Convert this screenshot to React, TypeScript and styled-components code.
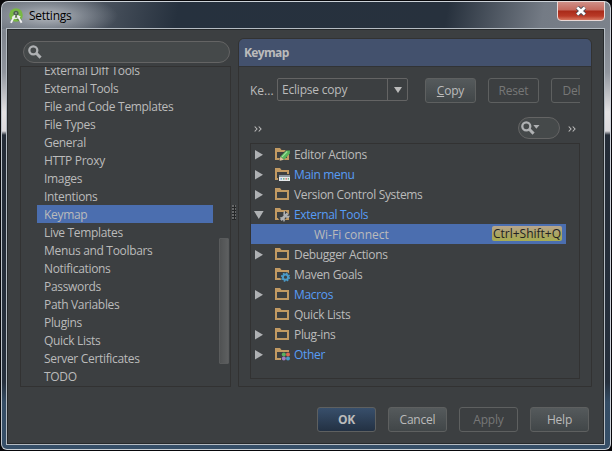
import type { FC, ReactNode } from 'react'
import { useState } from 'react'
import styled, { createGlobalStyle, css } from 'styled-components'

type Badge = 'pencil' | 'menu' | 'wrench' | 'gear' | 'dots'

interface TreeNode {
  label: string
  /** undefined means the node has no expander */
  open?: boolean
  changed?: boolean
  badge?: Badge
  shortcut?: string
}

const SETTINGS = [
  'External Diff Tools',
  'External Tools',
  'File and Code Templates',
  'File Types',
  'General',
  'HTTP Proxy',
  'Images',
  'Intentions',
  'Keymap',
  'Live Templates',
  'Menus and Toolbars',
  'Notifications',
  'Passwords',
  'Path Variables',
  'Plugins',
  'Quick Lists',
  'Server Certificates',
  'TODO'
]

const ACTIONS: TreeNode[] = [
  { label: 'Editor Actions', open: false, badge: 'pencil' },
  { label: 'Main menu', open: false, changed: true, badge: 'menu' },
  { label: 'Version Control Systems', open: false },
  { label: 'External Tools', open: true, changed: true, badge: 'wrench' },
  { label: 'Wi-Fi connect', shortcut: 'Ctrl+Shift+Q' },
  { label: 'Debugger Actions', open: false },
  { label: 'Maven Goals', badge: 'gear' },
  { label: 'Macros', open: false, changed: true },
  { label: 'Quick Lists' },
  { label: 'Plug-ins', open: false },
  { label: 'Other', open: false, changed: true, badge: 'dots' }
]

const AppIcon = () => (
  <svg width="15" height="16" viewBox="0 0 15 16">
    <circle cx="7" cy="7" r="6.8" fill="#78b843" />
    <path d="M4.6 9.6 7 5l5.6 6.4-2.2 1.8z" fill="#56793c" />
    <circle cx="7" cy="5.4" r="2.6" fill="#4e5f50" />
    <path d="M5.8 7.2 2 14.8M8.4 7.2l4.2 7.6" stroke="#f0f0f0" strokeWidth="1.9" fill="none" />
    <path d="M3.2 8.8c2.4 2.4 5.6 2.2 8-.6" stroke="#f0f0f0" strokeWidth="1.3" fill="none" />
    <circle cx="7" cy="5.2" r="1.1" fill="#8f9a91" />
  </svg>
)

const Magnifier: FC<{ menu?: boolean }> = ({ menu }) => (
  <svg width={menu ? 19 : 14} height="14" viewBox={menu ? '0 0 19 14' : '0 0 14 14'}>
    <circle cx="5.3" cy="5.3" r="4" fill="none" stroke="#afb1b3" strokeWidth="2.3" />
    <path d="m8 8 4.6 4.6" stroke="#afb1b3" strokeWidth="2.9" />
    {menu && <path d="M12.3 4h6.2l-3.1 3.7z" fill="#afb1b3" />}
  </svg>
)

const BADGES: Record<Badge, ReactNode> = {
  pencil: (
    <>
      <path d="m3.8 13.6 1.6-4.8L11.2 1.4h3.6v3L8.6 12.2z" fill="#3c3f41" />
      <path d="m5.4 8.6 6-6.2L15 2.6l-.2 3-5.8 6.2z" fill="#57b35b" />
      <path d="m7 8.9 5.2-5.4" stroke="#9be09b" strokeWidth="1.2" />
      <path d="m4.6 12.8.8-4.2L9 11.8z" fill="#d8c39a" />
    </>
  ),
  menu: (
    <>
      <path d="M3 6h12v8H3z" fill="#3c3f41" />
      <path d="M4 7h11v6H4z" fill="#e6e9eb" />
      <path d="M4 7h11v2H4z" fill="#8c969e" />
      <path d="M5.5 10.2H7v1.4H5.5z" fill="#4d8fd0" />
      <path d="M8 10.2h1.5v1.4H8z" fill="#4ca568" />
      <path d="M10.5 10.2H12v1.4h-1.5z" fill="#cf5f58" />
      <path d="M12.7 10.2H14v1.4h-1.3z" fill="#4ca568" />
    </>
  ),
  wrench: (
    <>
      <path d="M5 12.5 12.5 5" stroke="#3c3f41" strokeWidth="6" />
      <path d="m5.8 12 7-6.6" stroke="#afb1b3" strokeWidth="2.6" />
      <path d="M10 2.6v3.6l1.8 1.6H15l-1.2 2H11L8.4 7.2V4.4z" fill="#afb1b3" />
      <path d="M4.4 9.2h3.8l1.6 1.4V13l-1 1-.8-2.2-1.6-1.4z" fill="#afb1b3" />
    </>
  ),
  gear: (
    <>
      <circle cx="10.5" cy="9.2" r="5.1" fill="#3c3f41" />
      <circle cx="10.5" cy="9.2" r="3.9" fill="none" stroke="#4b9bc8" strokeWidth="1.5" strokeDasharray="1.55 1.51" />
      <circle cx="10.5" cy="9.2" r="2.6" fill="none" stroke="#4b9bc8" strokeWidth="2" />
    </>
  ),
  dots: (
    <>
      <path d="M6 4h9v9H6z" fill="#3c3f41" />
      <circle cx="8.8" cy="6.6" r="2" fill="#59b15d" />
      <circle cx="13" cy="6.6" r="2" fill="#dc6550" />
      <circle cx="8.8" cy="10.6" r="2" fill="#9c7cc1" />
      <circle cx="13" cy="10.6" r="2" fill="#489bc5" />
    </>
  )
}

const FolderIcon: FC<{ badge?: Badge }> = ({ badge }) => (
  <svg width="16" height="14" viewBox="0 0 16 14">
    <path d="M0 0h5l1.5 2H14v10H0zM2 4v6h10V4z" fill="#c29a62" fillRule="evenodd" />
    {badge && BADGES[badge]}
  </svg>
)

const Expander: FC<{ open: boolean }> = ({ open }) => (
  <svg width="10" height="10" viewBox="0 0 10 10">
    <path d={open ? 'M0 1h9.6L4.8 9z' : 'M1 0v9.4l8-4.7z'} fill="#afb1b3" />
  </svg>
)

const Chevrons = () => (
  <svg width="8" height="6" viewBox="0 0 8 6">
    <path d="M.7.5 3 3 .7 5.5M4.7.5 7 3 4.7 5.5" fill="none" stroke="#bbb" strokeWidth="1.1" />
  </svg>
)

const App = () => {
  const [page, setPage] = useState('Keymap')
  const [action, setAction] = useState('Wi-Fi connect')

  return (
    <>
      <GlobalStyle />
      <Frame>
        <TitleBar>
          <AppIcon />
          <Title>Settings</Title>
          <CloseButton aria-label="Close">
            <svg width="12" height="10" viewBox="0 0 12 10">
              <path d="m2.2 1.4 7.6 7.2M9.8 1.4 2.2 8.6" stroke="#4b4a55" strokeWidth="4.4" />
              <path d="m2.2 1.4 7.6 7.2M9.8 1.4 2.2 8.6" stroke="#fff" strokeWidth="2.7" />
            </svg>
          </CloseButton>
        </TitleBar>
        <Dialog>
          <Panes>
            <Sidebar>
              <SearchField>
                <Magnifier />
              </SearchField>
              <SettingsBox>
                <SettingsList>
                  {SETTINGS.map((label) => (
                    <SettingsItem key={label} $selected={label === page} onClick={() => setPage(label)}>
                      {label}
                    </SettingsItem>
                  ))}
                </SettingsList>
                <ScrollThumb />
              </SettingsBox>
            </Sidebar>
            <Splitter>
              <Grip />
            </Splitter>
            <Page>
              <PageHeader>Keymap</PageHeader>
              <KeymapRow>
                <KeymapLabel>Ke...</KeymapLabel>
                <Combo>
                  <ComboValue>Eclipse copy</ComboValue>
                  <ComboArrow>
                    <svg width="8" height="6" viewBox="0 0 8 6">
                      <path d="M0 0h8L4 6z" fill="#bbb" />
                    </svg>
                  </ComboArrow>
                </Combo>
                <Button $width={51}>
                  <Mnemonic>C</Mnemonic>opy
                </Button>
                <Button $width={51} disabled>
                  Reset
                </Button>
                <Button $width={58} disabled>
                  Delete
                </Button>
              </KeymapRow>
              <ActionBar>
                <Chevrons />
                <FilterField>
                  <Magnifier menu />
                </FilterField>
                <Chevrons />
              </ActionBar>
              <Tree>
                {ACTIONS.map((node) => (
                  <TreeRow
                    key={node.label}
                    $selected={node.label === action}
                    $changed={node.changed}
                    onClick={() => setAction(node.label)}>
                    <ExpanderCell>{node.open !== undefined && <Expander open={node.open} />}</ExpanderCell>
                    <IconCell $leaf={!!node.shortcut}>{!node.shortcut && <FolderIcon badge={node.badge} />}</IconCell>
                    <NodeLabel $leaf={!!node.shortcut}>{node.label}</NodeLabel>
                    {node.shortcut && <Shortcut>{node.shortcut}</Shortcut>}
                  </TreeRow>
                ))}
              </Tree>
            </Page>
          </Panes>
          <Footer>
            <Button $width={59} $primary>
              OK
            </Button>
            <Button $width={59}>Cancel</Button>
            <Button $width={59} disabled>
              Apply
            </Button>
            <Button $width={59}>Help</Button>
          </Footer>
        </Dialog>
      </Frame>
    </>
  )
}

const GlobalStyle = createGlobalStyle`
  * {
    box-sizing: border-box;
  }

  body {
    margin: 0;
    overflow: hidden;
    background: #08080b;
    color: #bbb;
    font: 12px/18px 'Open Sans', 'Noto Sans', sans-serif;
    white-space: nowrap;
    cursor: default;
  }

  svg {
    display: block;
    flex: none;
  }
`

const Frame = styled.div`
  width: 610px;
  height: 449px;
  margin: 1px;
  padding: 0 5px 4px 4px;
  border: 1px solid #ccd2d8;
  border-left-color: #bcc3ca;
  border-radius: 7px 7px 6px 6px;
  background:
    radial-gradient(ellipse 70px 22px at 46px 14px, rgba(196, 200, 205, 0.85), rgba(170, 176, 184, 0.5) 50%, transparent),
    linear-gradient(100deg, #6b727c 0, #535b66 80px, #26313e 175px, #27313d 440px, #747b85 535px, #7c828b 100%) 0 0 / 100% 27px no-repeat,
    linear-gradient(#7d838c 27px, #90959d 70px, #e4e2e3 110px, #dcdadd 129px, #242c37 133px, #26303d 380px, #354d65 400px, #364f68 100%);
`

const TitleBar = styled.div`
  display: flex;
  height: 26px;
  padding: 1px 0 0 3px;
  align-items: center;
`

const Title = styled.span`
  margin-left: 5px;
  color: #000;
  letter-spacing: -0.25px;
`

const CloseButton = styled.button`
  display: flex;
  align-items: center;
  justify-content: center;
  align-self: flex-start;
  width: 48px;
  height: 20px;
  margin: -2px 0 0 auto;
  padding: 0;
  border: 1px solid #e8d8d6;
  border-radius: 0 0 4px 4px;
  background: linear-gradient(#cf8f87 0, #c4695d 8px, #a92a19 9px, #b93a27 14px, #d77760 100%);
`

const Dialog = styled.div`
  display: flex;
  flex-direction: column;
  height: 417px;
  padding: 9px 12px 10px 12px;
  border: 1px solid #b4bbc2;
  outline: 1px solid #26292b;
  outline-offset: -2px;
  background: #3c3f41;
`

const Panes = styled.div`
  display: flex;
  height: 349px;
`

const Sidebar = styled.div`
  display: flex;
  flex-direction: column;
  width: 212px;
  padding: 3px 0 0 1px;
`

const SearchField = styled.div`
  display: flex;
  align-items: center;
  height: 22px;
  margin: 0 1px 3px 3px;
  padding-left: 4px;
  border: 1px solid #646464;
  border-radius: 11px;
  background: #45494a;
`

const SettingsBox = styled.div`
  position: relative;
  height: 321px;
  border: 1px solid #323232;
  overflow: hidden;
`

const SettingsList = styled.div`
  width: 176px;
  margin: -6px 0 0 16px;
`

const SettingsItem = styled.div<{ $selected: boolean }>`
  height: 18px;
  padding-left: 7px;
  letter-spacing: -0.32px;
  line-height: 20px;
  background: ${({ $selected }) => ($selected ? '#4b6eaf' : 'transparent')};
`

const ScrollThumb = styled.div`
  position: absolute;
  top: 171px;
  right: 1px;
  width: 10px;
  height: 126px;
  border: 1px solid #595b5c;
  border-radius: 1px;
  background: linear-gradient(90deg, #505253, #5d5f60);
`

const Splitter = styled.div`
  display: flex;
  align-items: center;
  width: 7px;
  padding: 0 1px;
`

const Grip = styled.div`
  width: 4px;
  height: 15px;
  background:
    radial-gradient(circle at 1px 1px, #8c8c8c 0.6px, transparent 0.9px) 0 0 / 3px 3px,
    #232526;
`

const Page = styled.div`
  flex: 1;
  min-width: 0;
  padding: 0 11px;
  border: 1px solid #323232;
  border-radius: 6px 6px 0 0;
  overflow: hidden;
`

const PageHeader = styled.div`
  height: 28px;
  margin: 0 -11px;
  padding-left: 5px;
  border-bottom: 1px solid #313335;
  background: #43516d;
  font-weight: 700;
  letter-spacing: -0.65px;
  line-height: 28px;
`

const KeymapRow = styled.div`
  display: flex;
  height: 50px;
  padding-top: 11px;
  overflow: hidden;
`

const KeymapLabel = styled.span`
  flex: none;
  width: 27px;
  line-height: 26px;
`

const Combo = styled.div`
  display: flex;
  width: 131px;
  height: 23px;
  margin-right: 17px;
  flex: none;
  border: 1px solid #646464;
  border-radius: 2px;
  line-height: 22px;
`

const ComboValue = styled.span`
  flex: 1;
  padding-left: 4px;
  letter-spacing: -0.2px;
`

const ComboArrow = styled.span`
  display: flex;
  align-items: center;
  justify-content: center;
  width: 20px;
  border-left: 1px solid #646464;
`

const Button = styled.button<{ $width: number; $primary?: boolean }>`
  flex: none;
  width: ${({ $width }) => $width}px;
  height: 25px;
  padding: 0;
  border: 1px solid #5e6060;
  border-radius: 3px;
  background: linear-gradient(#555a5c, #414648);
  color: #bbb;
  font: inherit;
  line-height: 24px;
  letter-spacing: -0.2px;

  & + & {
    margin-left: 12px;
  }

  ${({ $primary }) =>
    $primary &&
    css`
      background: linear-gradient(#384f6b, #233143);
      font-weight: 700;
    `}

  &:disabled {
    background: none;
    color: #777;
  }
`

const Mnemonic = styled.span`
  text-decoration: underline;
`

const ActionBar = styled.div`
  display: flex;
  align-items: center;
  height: 22px;
  padding: 2px 4px 0;
`

const FilterField = styled.div`
  display: flex;
  align-items: center;
  width: 42px;
  height: 22px;
  margin: -2px 8px 0 auto;
  padding-left: 2px;
  border: 1px solid #646464;
  border-radius: 11px;
  background: #45494a;
`

const Tree = styled.div`
  height: 236px;
  margin-top: 4px;
  border: 1px solid #323232;
`

const TreeRow = styled.div<{ $selected: boolean; $changed?: boolean }>`
  display: flex;
  align-items: center;
  width: 315px;
  height: 20px;
  color: ${({ $changed }) => ($changed ? '#589df6' : '#bbb')};
  background: ${({ $selected }) => ($selected ? '#4b6eaf' : 'transparent')};
`

const ExpanderCell = styled.span`
  width: 24px;
  padding: 2px 0 0 3px;
`

const IconCell = styled.span<{ $leaf: boolean }>`
  width: ${({ $leaf }) => ($leaf ? 39 : 19)}px;
  padding-top: 2px;
`

const NodeLabel = styled.span<{ $leaf: boolean }>`
  flex: 1;
  padding-top: 2px;
  letter-spacing: ${({ $leaf }) => ($leaf ? '0' : '-0.33px')};
`

const Shortcut = styled.span`
  width: 70px;
  height: 15px;
  margin: -1px 4px 0 0;
  border-radius: 2px;
  background: linear-gradient(#b8a58d, #a9a45f 60%, #a6ac52);
  color: #222;
  line-height: 15px;
  text-align: center;
`

const Footer = styled.div`
  display: flex;
  justify-content: flex-end;
  margin-top: 20px;
  padding-right: 3px;
`

export default App
